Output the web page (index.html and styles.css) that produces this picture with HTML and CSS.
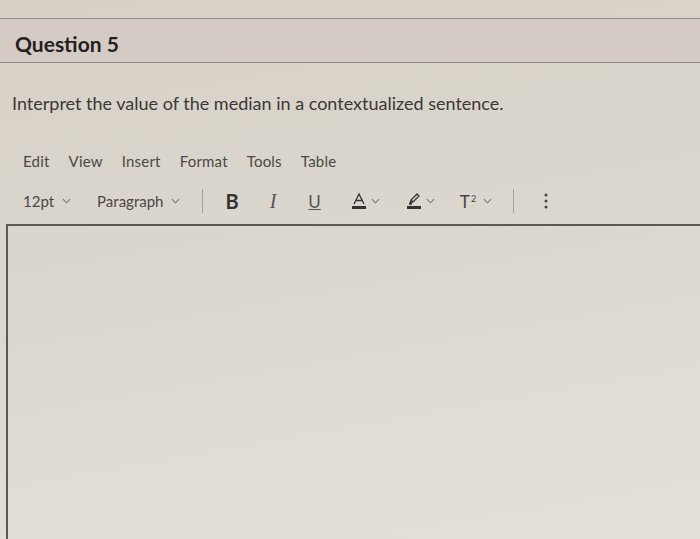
FILE: index.html
```html
<!DOCTYPE html>
<html lang="en">
<head>
    <meta charset="UTF-8">
    <title>Question 5</title>
    <link rel="stylesheet" href="styles.css">
</head>
<body>
    <div class="page">
        <div class="question-header">
            <h2>Question 5</h2>
        </div>
        <p class="prompt">Interpret the value of the median in a contextualized sentence.</p>

        <div class="editor">
            <div class="menubar">
                <span>Edit</span>
                <span>View</span>
                <span>Insert</span>
                <span>Format</span>
                <span>Tools</span>
                <span>Table</span>
            </div>
            <div class="toolbar">
                <span class="drop size">12pt <svg class="chev" viewBox="0 0 10 6"><path d="M1 1l4 4 4-4"/></svg></span>
                <span class="drop block">Paragraph <svg class="chev" viewBox="0 0 10 6"><path d="M1 1l4 4 4-4"/></svg></span>
                <span class="sep"></span>
                <span class="btn bold">B</span>
                <span class="btn ital">I</span>
                <span class="btn under">U</span>
                <span class="btn color">
                    <svg width="16" height="18" viewBox="0 0 16 18"><path d="M3 12L8 2l5 10M5 8.5h6" fill="none" stroke="#333" stroke-width="1.3"/><rect x="1" y="14" width="14" height="3" fill="#333"/></svg>
                    <svg class="chev" viewBox="0 0 10 6"><path d="M1 1l4 4 4-4"/></svg>
                </span>
                <span class="btn color pen">
                    <svg width="16" height="18" viewBox="0 0 16 18"><path d="M4 11l1-3 6-6 2 2-6 6zM5 8l2 2M3 12h3" fill="none" stroke="#333" stroke-width="1.3"/><rect x="1" y="14" width="14" height="3" fill="#333"/></svg>
                    <svg class="chev" viewBox="0 0 10 6"><path d="M1 1l4 4 4-4"/></svg>
                </span>
                <span class="btn sup">T<span class="two">2</span><svg class="chev" viewBox="0 0 10 6"><path d="M1 1l4 4 4-4"/></svg></span>
                <span class="sep sep-end"></span>
                <span class="btn more">
                    <svg width="4" height="16" viewBox="0 0 4 16"><circle cx="2" cy="2" r="1.5"/><circle cx="2" cy="8" r="1.5"/><circle cx="2" cy="14" r="1.5"/></svg>
                </span>
            </div>
            <div class="edit-area"></div>
        </div>
    </div>
</body>
</html>
```

FILE: styles.css
```css
body {
    margin: 0;
    padding: 0;
    font-family: Lato, "Open Sans", sans-serif;
    color: #2d2b2a;
    background: linear-gradient(170deg, #d6d0c7 0%, #dcd7ce 45%, #e4e0d8 100%);
    height: 539px;
    overflow: hidden;
}

.page {
    padding-top: 18px;
}

.question-header {
    border-top: 1px solid #8f8a83;
    border-bottom: 1px solid #8f8a83;
    background-color: #d4ccc4;
    height: 43px;
    padding-left: 15px;
}

.question-header h2 {
    margin: 0;
    padding-top: 13px;
    font-size: 21px;
    font-weight: 700;
    color: #232120;
    line-height: 24px;
}

.prompt {
    margin: 29px 0 0 12px;
    font-size: 18px;
    line-height: 22px;
    color: #3a3836;
}

.menubar {
    display: flex;
    gap: 19px;
    padding: 38px 0 0 23px;
    font-size: 15px;
    line-height: 18px;
    letter-spacing: 0.2px;
    color: #4a4845;
}

.toolbar {
    display: flex;
    align-items: center;
    height: 36px;
    margin-top: 13px;
    padding-left: 23px;
    font-size: 15px;
    color: #4a4845;
}

.drop {
    display: flex;
    align-items: center;
    gap: 8px;
}

.size {
    margin-right: 26px;
}

.chev {
    width: 9px;
    height: 6px;
    fill: none;
    stroke: #7a7773;
    stroke-width: 1.2;
}

.sep {
    width: 1px;
    height: 24px;
    background-color: #a8a39c;
    margin: 0 22px 0 22px;
}

.sep-end {
    margin: 0 30px 0 21px;
}

.btn {
    display: flex;
    align-items: center;
    gap: 4px;
    color: #333;
}

.bold {
    font-weight: 700;
    font-size: 20px;
    margin-right: 31px;
}

.ital {
    font-family: "Liberation Serif", serif;
    font-style: italic;
    font-size: 20px;
    color: #555;
    margin-right: 32px;
}

.under {
    font-size: 17px;
    text-decoration: underline;
    color: #555;
    margin-right: 30px;
}

.color {
    margin-right: 26px;
}

.pen {
    margin-right: 25px;
}

.sup {
    font-size: 17px;
    color: #444;
    gap: 0;
}

.sup .two {
    font-size: 9px;
    align-self: flex-start;
    margin: 2px 7px 0 1px;
}

.more svg {
    fill: #444;
}

.edit-area {
    margin: 5px 0 0 6px;
    height: 320px;
    border-top: 2px solid #5b5857;
    border-left: 2px solid #5b5857;
}
```
